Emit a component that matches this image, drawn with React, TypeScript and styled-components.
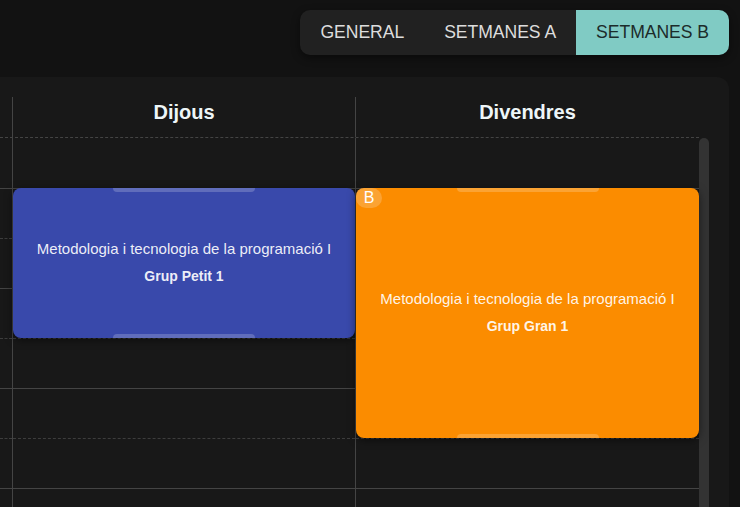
import React from "react";
import styled, { createGlobalStyle } from "styled-components";

const GlobalStyle = createGlobalStyle`
  html, body {
    margin: 0;
    padding: 0;
    background: #121212;
    overflow: hidden;
    font-family: "Liberation Sans", Arial, sans-serif;
  }
`;

const Page = styled.div`
  padding-top: 10px;
  display: flex;
  flex-direction: column;
`;

const TabRow = styled.div`
  display: flex;
  justify-content: flex-end;
  padding-right: 11px;
`;

const TabBar = styled.div`
  display: flex;
  height: 45px;
  background: #212121;
  border-radius: 10px;
  overflow: hidden;
  box-shadow: 0 3px 8px rgba(0, 0, 0, 0.45);
`;

const Tab = styled.button<{ $active?: boolean }>`
  border: none;
  margin: 0;
  padding: 0 20px;
  font-family: "Liberation Sans", Arial, sans-serif;
  font-size: 17.6px;
  letter-spacing: -0.05px;
  background: ${(p) => (p.$active ? "#80cbc4" : "transparent")};
  color: ${(p) => (p.$active ? "#1c2b2a" : "#dddddd")};
  cursor: pointer;
`;

const Panel = styled.div`
  margin-top: 22px;
  margin-right: 11px;
  height: 520px;
  background: #181818;
  border-radius: 0 12px 0 0;
  padding: 20px 20px 0 0;
  box-sizing: border-box;
  display: flex;
  flex-direction: column;
`;

const HeaderRow = styled.div`
  display: grid;
  grid-template-columns: 12px 343px 1fr;
  margin-right: 10px;
  border-bottom: 1px dashed #444;
`;

const HeaderCell = styled.div<{ $line?: boolean }>`
  height: 40px;
  line-height: 30px;
  text-align: center;
  font-size: 20px;
  font-weight: bold;
  color: #eef6f8;
  border-left: ${(p) => (p.$line ? "1px solid #444" : "none")};
`;

const BodyRow = styled.div`
  display: flex;
  height: 470px;
  overflow: hidden;
`;

const Grid = styled.div`
  flex: 1;
  display: grid;
  grid-template-columns: 12px 343px 1fr;
  align-content: start;
  padding-top: 1px;
`;

const ScrollTrack = styled.div`
  width: 10px;
  flex: none;
  display: flex;
  flex-direction: column;
`;

const ScrollThumb = styled.div`
  height: 400px;
  background: #333;
  border-radius: 5px;
`;

const Column = styled.div<{ $line?: boolean }>`
  position: relative;
  border-left: ${(p) => (p.$line ? "1px solid #444" : "none")};
  margin-top: -1px;
  padding-top: 1px;
`;

const Slot = styled.div<{ $dashed?: boolean }>`
  height: 49px;
  border-bottom: 1px ${(p) => (p.$dashed ? "dashed #3d3d3d" : "solid #444")};
`;

const Event = styled.div<{ $color: string; $top: number; $height: number }>`
  position: absolute;
  left: 0;
  right: 0;
  top: ${(p) => p.$top}px;
  height: ${(p) => p.$height}px;
  box-sizing: border-box;
  padding-bottom: 3px;
  background: ${(p) => p.$color};
  border-radius: 8px;
  box-shadow: 0 2px 8px rgba(0, 0, 0, 0.5);
  display: flex;
  flex-direction: column;
  align-items: center;
  justify-content: center;
  color: rgba(255, 255, 255, 0.92);
  text-align: center;
  z-index: 1;
`;

const Handle = styled.div<{ $bottom?: boolean }>`
  position: absolute;
  left: 50%;
  width: 142px;
  margin-left: -71px;
  height: 4px;
  background: rgba(255, 255, 255, 0.2);
  ${(p) =>
    p.$bottom
      ? "bottom: 0; border-radius: 4px 4px 0 0;"
      : "top: 0; border-radius: 0 0 4px 4px;"}
`;

const Badge = styled.div`
  position: absolute;
  top: 0;
  left: 0;
  width: 26px;
  height: 20px;
  border-radius: 8px 10px 10px 10px;
  background: rgba(255, 255, 255, 0.2);
  color: #fff;
  font-size: 16px;
  line-height: 20px;
  text-align: center;
`;

const Title = styled.div`
  font-size: 15px;
  line-height: 18px;
`;

const Group = styled.div`
  margin-top: 10px;
  font-size: 14px;
  font-weight: bold;
  line-height: 16px;
`;

const SLOTS = 10;
const slotList = Array.from({ length: SLOTS }, (_, i) => i);

type Ev = { title: string; group: string; color: string; start: number; span: number; badge?: string };

const days: { name: string; events: Ev[] }[] = [
  {
    name: "Dijous",
    events: [
      {
        title: "Metodologia i tecnologia de la programació I",
        group: "Grup Petit 1",
        color: "#3949ab",
        start: 1,
        span: 3,
      },
    ],
  },
  {
    name: "Divendres",
    events: [
      {
        title: "Metodologia i tecnologia de la programació I",
        group: "Grup Gran 1",
        color: "#fb8c00",
        start: 1,
        span: 5,
        badge: "B",
      },
    ],
  },
];

const Slots = () => (
  <>
    {slotList.map((i) => (
      <Slot key={i} $dashed={i % 2 === 1} />
    ))}
  </>
);

export default function App() {
  return (
    <>
      <GlobalStyle />
      <Page>
        <TabRow>
          <TabBar>
            <Tab>GENERAL</Tab>
            <Tab>SETMANES A</Tab>
            <Tab $active>SETMANES B</Tab>
          </TabBar>
        </TabRow>
        <Panel>
          <HeaderRow>
            <HeaderCell />
            {days.map((d) => (
              <HeaderCell key={d.name} $line>
                {d.name}
              </HeaderCell>
            ))}
          </HeaderRow>
          <BodyRow>
            <Grid>
              <Column>
                <Slots />
              </Column>
              {days.map((d) => (
                <Column key={d.name} $line>
                  <Slots />
                  {d.events.map((e, k) => (
                    <Event key={k} $color={e.color} $top={e.start * 50} $height={e.span * 50}>
                      <Handle />
                      {e.badge && <Badge>{e.badge}</Badge>}
                      <Title>{e.title}</Title>
                      <Group>{e.group}</Group>
                      <Handle $bottom />
                    </Event>
                  ))}
                </Column>
              ))}
            </Grid>
            <ScrollTrack>
              <ScrollThumb />
            </ScrollTrack>
          </BodyRow>
        </Panel>
      </Page>
    </>
  );
}
